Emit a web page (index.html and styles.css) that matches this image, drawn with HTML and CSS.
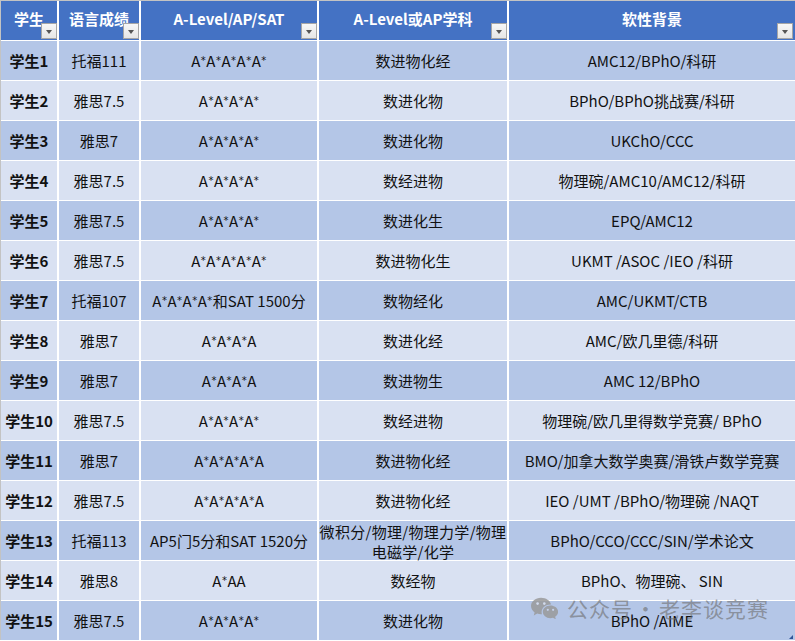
FILE: index.html
```html
<!DOCTYPE html>
<html lang="zh-CN">
<head>
<meta charset="utf-8">
<title>学生成绩</title>
<link rel="stylesheet" href="styles.css">
</head>
<body>
<div class="page">
  <div class="sheet">
    <div class="row head">
      <div class="c">学生<span class="dd"></span></div>
      <div class="c">语言成绩<span class="dd"></span></div>
      <div class="c">A-Level/AP/SAT<span class="dd"></span></div>
      <div class="c">A-Level或AP学科<span class="dd"></span></div>
      <div class="c last">软性背景<span class="dd"></span></div>
    </div>
    <div class="row a">
      <div class="c b">学生1</div><div class="c">托福111</div>
      <div class="c">A<span class="s">*</span>A<span class="s">*</span>A<span class="s">*</span>A<span class="s">*</span>A<span class="s">*</span></div>
      <div class="c">数进物化经</div><div class="c">AMC12/BPhO/科研</div>
    </div>
    <div class="row e">
      <div class="c b">学生2</div><div class="c">雅思7.5</div>
      <div class="c">A<span class="s">*</span>A<span class="s">*</span>A<span class="s">*</span>A<span class="s">*</span></div>
      <div class="c">数进化物</div><div class="c">BPhO/BPhO挑战赛/科研</div>
    </div>
    <div class="row a">
      <div class="c b">学生3</div><div class="c">雅思7</div>
      <div class="c">A<span class="s">*</span>A<span class="s">*</span>A<span class="s">*</span>A<span class="s">*</span></div>
      <div class="c">数进化物</div><div class="c">UKChO/CCC</div>
    </div>
    <div class="row e">
      <div class="c b">学生4</div><div class="c">雅思7.5</div>
      <div class="c">A<span class="s">*</span>A<span class="s">*</span>A<span class="s">*</span>A<span class="s">*</span></div>
      <div class="c">数经进物</div><div class="c">物理碗/AMC10/AMC12/科研</div>
    </div>
    <div class="row a">
      <div class="c b">学生5</div><div class="c">雅思7.5</div>
      <div class="c">A<span class="s">*</span>A<span class="s">*</span>A<span class="s">*</span>A<span class="s">*</span></div>
      <div class="c">数进化生</div><div class="c">EPQ/AMC12</div>
    </div>
    <div class="row e">
      <div class="c b">学生6</div><div class="c">雅思7.5</div>
      <div class="c">A<span class="s">*</span>A<span class="s">*</span>A<span class="s">*</span>A<span class="s">*</span>A<span class="s">*</span></div>
      <div class="c">数进物化生</div><div class="c">UKMT /ASOC /IEO /科研</div>
    </div>
    <div class="row a">
      <div class="c b">学生7</div><div class="c">托福107</div>
      <div class="c">A<span class="s">*</span>A<span class="s">*</span>A<span class="s">*</span>A<span class="s">*</span>和SAT 1500分</div>
      <div class="c">数物经化</div><div class="c">AMC/UKMT/CTB</div>
    </div>
    <div class="row e">
      <div class="c b">学生8</div><div class="c">雅思7</div>
      <div class="c">A<span class="s">*</span>A<span class="s">*</span>A<span class="s">*</span>A</div>
      <div class="c">数进化经</div><div class="c">AMC/欧几里德/科研</div>
    </div>
    <div class="row a">
      <div class="c b">学生9</div><div class="c">雅思7</div>
      <div class="c">A<span class="s">*</span>A<span class="s">*</span>A<span class="s">*</span>A</div>
      <div class="c">数进物生</div><div class="c">AMC 12/BPhO</div>
    </div>
    <div class="row e">
      <div class="c b">学生10</div><div class="c">雅思7.5</div>
      <div class="c">A<span class="s">*</span>A<span class="s">*</span>A<span class="s">*</span>A<span class="s">*</span></div>
      <div class="c">数经进物</div><div class="c">物理碗/欧几里得数学竞赛/ BPhO</div>
    </div>
    <div class="row a">
      <div class="c b">学生11</div><div class="c">雅思7</div>
      <div class="c">A<span class="s">*</span>A<span class="s">*</span>A<span class="s">*</span>A<span class="s">*</span>A</div>
      <div class="c">数进物化经</div><div class="c">BMO/加拿大数学奥赛/滑铁卢数学竞赛</div>
    </div>
    <div class="row e">
      <div class="c b">学生12</div><div class="c">雅思7.5</div>
      <div class="c">A<span class="s">*</span>A<span class="s">*</span>A<span class="s">*</span>A<span class="s">*</span>A</div>
      <div class="c">数进物化经</div><div class="c">IEO /UMT /BPhO/物理碗 /NAQT</div>
    </div>
    <div class="row a">
      <div class="c b">学生13</div><div class="c">托福113</div>
      <div class="c">AP5门5分和SAT 1520分</div>
      <div class="c two">微积分/物理/物理力学/物理<br>电磁学/化学</div>
      <div class="c">BPhO/CCO/CCC/SIN/学术论文</div>
    </div>
    <div class="row e">
      <div class="c b">学生14</div><div class="c">雅思8</div>
      <div class="c">A<span class="s">*</span>AA</div>
      <div class="c">数经物</div><div class="c">BPhO、物理碗、 SIN</div>
    </div>
    <div class="row a">
      <div class="c b">学生15</div><div class="c">雅思7.5</div>
      <div class="c">A<span class="s">*</span>A<span class="s">*</span>A<span class="s">*</span>A<span class="s">*</span></div>
      <div class="c">数进化物</div><div class="c">BPhO /AIME</div>
    </div>
  </div>

  <div class="watermark">
    <svg class="wx" width="28" height="22" viewBox="0 0 28 22">
      <path d="M11 0.8C5.4 0.8 1 4.5 1 9.1c0 2.6 1.4 4.8 3.6 6.3L3.8 18.4l3.4-1.8c1.2.4 2.5.6 3.8.6.3 0 .6 0 .9 0-.2-.7-.3-1.4-.3-2.1 0-4.3 4-7.7 9-7.7h.4C20.1 3.6 16 .8 11 .8z" fill="#9a9a9a"/>
      <circle cx="7.6" cy="6.6" r="1.3" fill="#d8dfee"/>
      <circle cx="14.3" cy="6.6" r="1.3" fill="#d8dfee"/>
      <path d="M20.4 8.4c-4.3 0-7.6 2.9-7.6 6.4s3.4 6.4 7.6 6.4c.9 0 1.8-.1 2.6-.4l2.8 1.5-.7-2.5c1.8-1.2 3-3 3-5 0-3.5-3.4-6.4-7.7-6.4z" fill="#9a9a9a"/>
      <circle cx="17.8" cy="12.8" r="1.1" fill="#c8d3ea"/>
      <circle cx="23.1" cy="12.8" r="1.1" fill="#c8d3ea"/>
    </svg>
    <span class="wt">公众号</span><span class="dot">·</span><span class="wt">老李谈竞赛</span>
  </div>
  <div class="grip"></div>
</div>
</body>
</html>
```

FILE: styles.css
```css
html, body {
  margin: 0;
  padding: 0;
  background: #ffffff;
}

body {
  width: 795px;
  height: 641px;
  overflow: hidden;
  font-family: "Noto Sans CJK SC", "Noto Sans", sans-serif;
  color: #111111;
}

.page {
  position: relative;
  width: 795px;
  height: 641px;
  overflow: hidden;
}

.sheet {
  display: grid;
  grid-template-columns: 56px 80px 176px 188px 286px;
  grid-auto-rows: 39px;
  column-gap: 2px;
  row-gap: 1px;
  background: #ffffff;
  border-left: 1px solid #c3c3c3;
  border-top: 1px solid #c3c3c3;
}

.row {
  display: contents;
}

.c {
  display: flex;
  align-items: center;
  justify-content: center;
  text-align: center;
  font-size: 15px;
  line-height: 20px;
  white-space: nowrap;
  overflow: visible;
}

.row.a .c {
  background: #b4c6e7;
}

.row.e .c {
  background: #d9e1f2;
}

.row.head .c {
  position: relative;
  background: #4472c4;
  color: #ffffff;
  font-weight: 700;
  padding-bottom: 3px;
  box-sizing: border-box;
}

.c.b {
  font-weight: 700;
}

.c.two {
  display: block;
  white-space: nowrap;
  line-height: 20px;
  padding-top: 1px;
  box-sizing: border-box;
  letter-spacing: 0.3px;
}

.s {
  font-family: "DejaVu Sans", sans-serif;
  font-size: 10px;
  vertical-align: -2px;
  margin: 0 0.5px;
}

.dd {
  position: absolute;
  right: 0;
  bottom: 1px;
  width: 16px;
  height: 16px;
  box-sizing: border-box;
  border: 1px solid #a6a6a6;
  background: linear-gradient(#f7f7f7, #e6e6e6);
}

.dd::after {
  content: "";
  position: absolute;
  left: 4px;
  top: 6px;
  width: 0;
  height: 0;
  border-left: 3.5px solid transparent;
  border-right: 3.5px solid transparent;
  border-top: 4px solid #555555;
}

.row.head .c.last .dd {
  right: 2px;
}

.watermark {
  position: absolute;
  left: 530px;
  top: 596px;
  display: flex;
  align-items: center;
  color: rgba(110, 110, 110, 0.62);
  font-size: 21px;
  line-height: 24px;
  letter-spacing: 1px;
}

.wx {
  margin-right: 9px;
  opacity: 0.85;
}

.dot {
  margin: 0 2px;
}

.grip {
  position: absolute;
  right: 2px;
  bottom: 2px;
  width: 0;
  height: 0;
  border-left: 4px solid transparent;
  border-bottom: 4px solid #2f5597;
}
```
